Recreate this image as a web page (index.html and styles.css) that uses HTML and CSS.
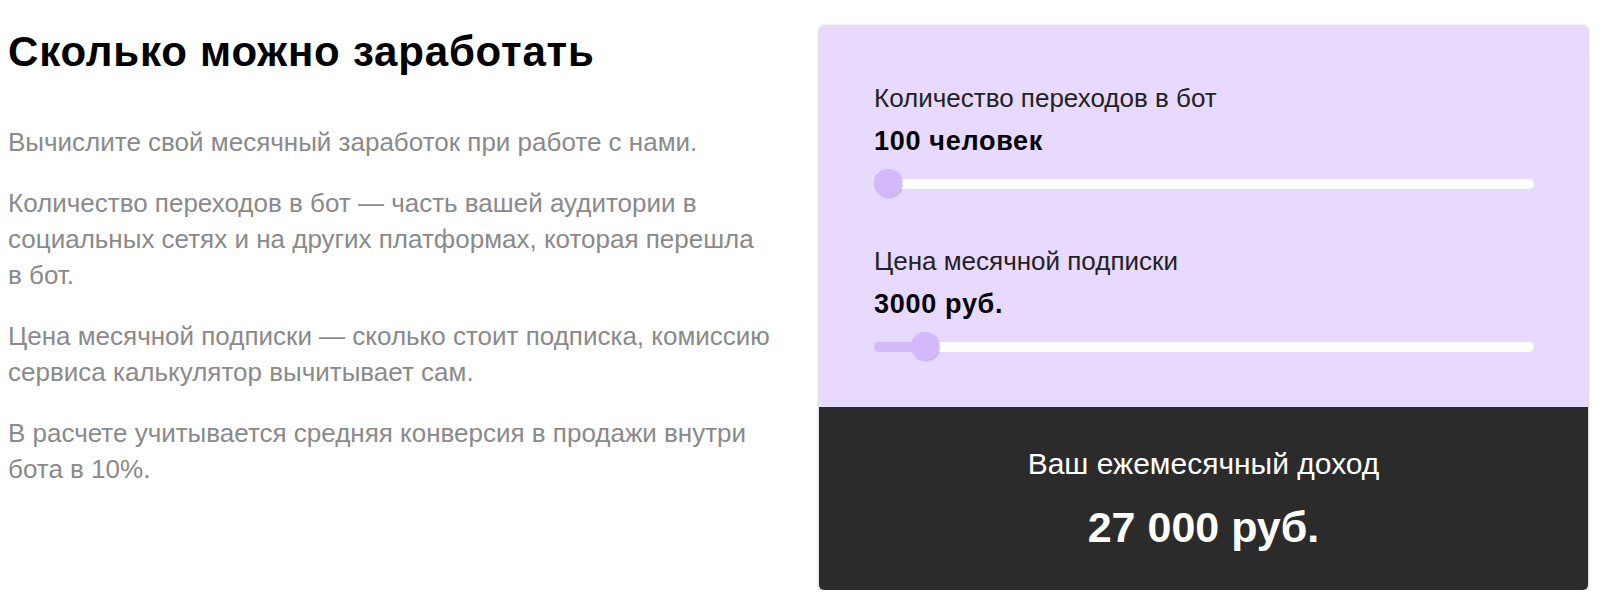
FILE: index.html
```html
<!DOCTYPE html>
<html lang="ru">
<head>
<meta charset="utf-8">
<title>Сколько можно заработать</title>
<link rel="stylesheet" href="styles.css">
</head>
<body>
<main class="page">
  <section class="intro">
    <h1 class="title">Сколько можно заработать</h1>
    <p class="text">Вычислите свой месячный заработок при работе с нами.</p>
    <p class="text">Количество переходов в бот — часть вашей аудитории в социальных сетях и на других платформах, которая перешла в бот.</p>
    <p class="text">Цена месячной подписки — сколько стоит подписка, комиссию сервиса калькулятор вычитывает сам.</p>
    <p class="text">В расчете учитывается средняя конверсия в продажи внутри бота в 10%.</p>
  </section>
  <section class="calc">
    <div class="inputs">
      <div class="field">
        <div class="field-label">Количество переходов в бот</div>
        <div class="field-value">100 человек</div>
        <input class="range" type="range" min="100" max="10000" value="100" style="--fill: 0%">
      </div>
      <div class="field">
        <div class="field-label">Цена месячной подписки</div>
        <div class="field-value">3000 руб.</div>
        <input class="range" type="range" min="100" max="50000" value="3000" style="--fill: 7.6%">
      </div>
    </div>
    <div class="result">
      <div class="result-label">Ваш ежемесячный доход</div>
      <div class="result-value">27 000 руб.</div>
    </div>
  </section>
</main>
</body>
</html>
```

FILE: styles.css
```css
html, body {
  margin: 0;
  padding: 0;
  background: #fff;
}

body {
  font-family: "Liberation Sans", Arial, sans-serif;
}

.page {
  display: grid;
  grid-template-columns: 1fr 769px;
  column-gap: 46px;
  padding: 25px 12px 0 8px;
}

.title {
  margin: 3px 0 48px;
  font-size: 42px;
  line-height: 48px;
  letter-spacing: 0.8px;
  font-weight: 700;
  color: #000;
}

.text {
  margin: 0 0 25px;
  font-size: 26px;
  line-height: 36px;
  color: #8a8a8a;
}

.calc {
  border-radius: 5px;
  overflow: hidden;
  box-shadow: 0 1px 3px rgba(0, 0, 0, 0.35);
  display: flex;
  flex-direction: column;
  height: 565px;
}

.inputs {
  background: #e8d9fe;
  padding: 55px 54px 46px 55px;
  display: flex;
  flex-direction: column;
  gap: 45px;
}

.field-label {
  font-size: 26px;
  line-height: 36px;
  color: #222;
}

.field-value {
  margin-top: 7px;
  font-size: 27px;
  line-height: 36px;
  letter-spacing: 0.7px;
  font-weight: 700;
  color: #000;
}

.range {
  -webkit-appearance: none;
  appearance: none;
  display: block;
  width: 100%;
  height: 28px;
  margin: 11px 0 0;
  background: transparent;
}

.range::-webkit-slider-runnable-track {
  height: 10px;
  border-radius: 5px;
  background: linear-gradient(to right, #d3b9fb var(--fill), #ffffff var(--fill));
}

.range::-webkit-slider-thumb {
  -webkit-appearance: none;
  appearance: none;
  width: 28px;
  height: 28px;
  margin-top: -10px;
  border-radius: 50%;
  background: #d3b9fb;
  box-shadow: 1px 1px 2px rgba(0, 0, 0, 0.2);
}

.result {
  flex: 1;
  background: #2b2b2b;
  color: #fff;
  text-align: center;
  padding: 40px 20px 38px;
  display: flex;
  flex-direction: column;
  gap: 22px;
}

.result-label {
  font-size: 30px;
  line-height: 34px;
}

.result-value {
  font-size: 43px;
  line-height: 49px;
  font-weight: 700;
}
```
